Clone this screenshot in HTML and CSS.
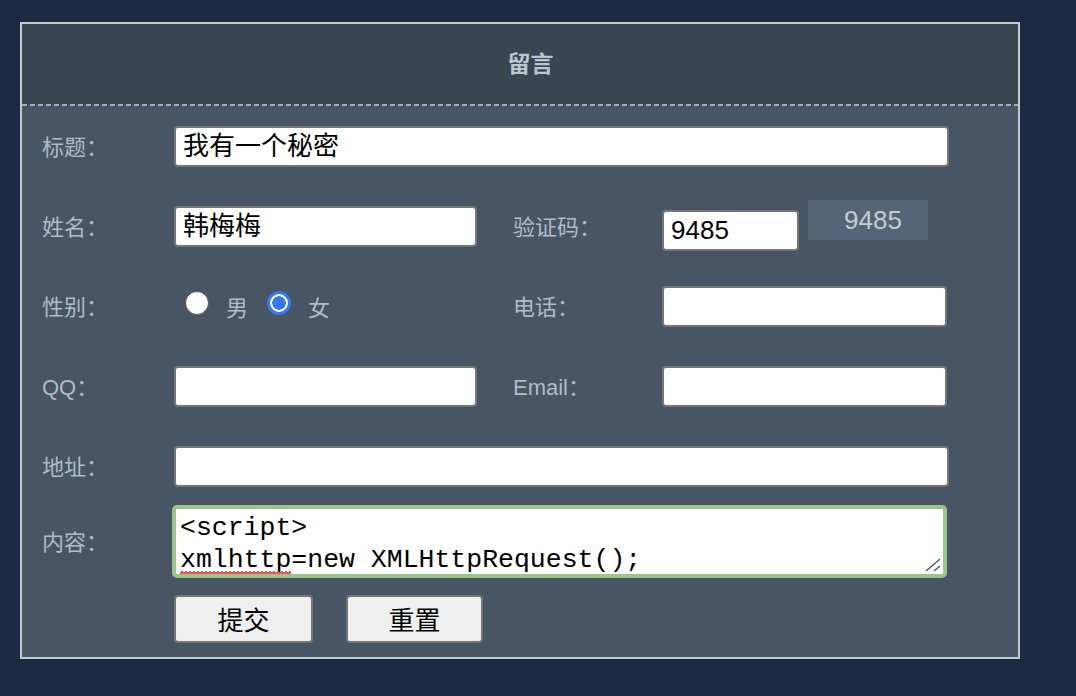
FILE: index.html
```html
<!DOCTYPE html>
<html lang="zh-CN">
<head>
<meta charset="utf-8">
<title>留言</title>
<link rel="stylesheet" href="styles.css">
</head>
<body>
<div class="panel">
  <div class="panel-head">留言</div>
  <div class="dash"></div>
  <div class="panel-body">
    <div class="row">
      <span class="label">标题：</span>
      <div class="field full">我有一个秘密</div>
    </div>
    <div class="row">
      <span class="label">姓名：</span>
      <div class="field half">韩梅梅</div>
      <span class="label right">验证码：</span>
      <div class="captcha-group">
        <div class="field code">9485</div>
        <div class="captcha">9485</div>
      </div>
    </div>
    <div class="row">
      <span class="label">性别：</span>
      <div class="radios">
        <span class="radio"></span><span class="radio-text">男</span>
        <span class="radio checked"></span><span class="radio-text">女</span>
      </div>
      <span class="label right">电话：</span>
      <div class="field rhalf"></div>
    </div>
    <div class="row">
      <span class="label">QQ：</span>
      <div class="field half"></div>
      <span class="label right">Email：</span>
      <div class="field rhalf"></div>
    </div>
    <div class="row">
      <span class="label">地址：</span>
      <div class="field full"></div>
    </div>
    <div class="row-text">
      <span class="label">内容：</span>
      <div class="textarea">
        <div class="ta-text">&lt;script&gt;
<span class="misspelled">xmlhttp</span>=new XMLHttpRequest();</div>
        <svg class="grip" width="16" height="14" viewBox="0 0 16 14"><path d="M1 13 L15 1 M9 13 L15 8" stroke="#555" stroke-width="1.4" fill="none"/></svg>
      </div>
    </div>
    <div class="buttons">
      <div class="btn btn-submit">提交</div>
      <div class="btn btn-reset">重置</div>
    </div>
  </div>
</div>
</body>
</html>
```
FILE: styles.css
```css
html, body {
  margin: 0;
  padding: 0;
  background: #1c2b43;
  width: 1076px;
  height: 696px;
  overflow: hidden;
}
body {
  padding-top: 22px;
  padding-left: 20px;
  box-sizing: border-box;
  font-family: "Liberation Sans", "Noto Sans CJK SC", sans-serif;
}
.panel {
  width: 1000px;
  border: 2px solid #c3cbd3;
  box-sizing: border-box;
  background: #475564;
}
.panel-head {
  height: 80px;
  background: #3a4552;
  color: #bcc6cf;
  font-size: 23px;
  font-weight: bold;
  display: flex;
  align-items: center;
  justify-content: center;
  padding-left: 21px;
  padding-bottom: 4px;
  box-sizing: border-box;
  font-family: "Noto Sans CJK SC", sans-serif;
}
.dash {
  height: 2px;
  background: repeating-linear-gradient(to right, #a2aebb 0 5px, transparent 5px 8px);
  background-color: #3f4b59;
}
.panel-body {
  padding: 0 0 14px 20px;
}
.row {
  height: 80px;
  display: flex;
  align-items: center;
}
.label {
  width: 132px;
  flex: none;
  color: #b0bcc7;
  font-size: 22px;
  font-family: "Liberation Sans", "Noto Sans CJK SC", sans-serif;
  margin-top: -3px;
}
.label.right {
  width: 149px;
  margin-left: 36px;
}
.field {
  height: 41px;
  box-sizing: border-box;
  background: #fff;
  border: 2px solid #767676;
  border-radius: 4px;
  padding-left: 7px;
  font-size: 26px;
  line-height: 37px;
  color: #000;
  flex: none;
}
.field.full { width: 775px; }
.field.half { width: 303px; }
.field.rhalf { width: 285px; }
.field.code { width: 137px; margin-top: 10px; }
.captcha-group {
  display: flex;
  align-items: flex-start;
  gap: 9px;
  height: 51px;
  margin-top: -2px;
}
.captcha {
  width: 120px;
  height: 40px;
  background: #536576;
  color: #c4ccd3;
  font-size: 26px;
  line-height: 40px;
  text-align: center;
  padding-left: 10px;
  box-sizing: border-box;
}
.radios {
  width: 303px;
  display: flex;
  align-items: center;
  padding-left: 11px;
  box-sizing: border-box;
}
.radio {
  width: 24px;
  height: 24px;
  box-sizing: border-box;
  border-radius: 50%;
  background: #fff;
  border: 1.5px solid #555;
  margin-bottom: 7px;
  flex: none;
}
.radio.checked {
  border: 3px solid #3478f6;
  background: radial-gradient(circle, #3478f6 0 6.5px, #fff 7px);
}
.radio-text {
  color: #b0bcc7;
  font-size: 22px;
  margin-left: 17px;
  margin-right: 19px;
}
.row-text {
  display: flex;
  align-items: center;
  margin-top: -1px;
}
.textarea {
  position: relative;
  width: 775px;
  height: 73px;
  margin-left: -2px;
  box-sizing: border-box;
  border: 4px solid #9cc48b;
  border-radius: 5px;
  background: #fff;
  padding: 4px 0 0 4px;
  overflow: hidden;
}
.ta-text {
  font-family: "Liberation Mono", "DejaVu Sans Mono", monospace;
  font-size: 26.5px;
  line-height: 31.5px;
  white-space: pre;
  color: #000;
}
.misspelled {
  position: relative;
}
.misspelled::after {
  content: "";
  position: absolute;
  left: 0;
  right: 0;
  bottom: 0;
  height: 4px;
  background: radial-gradient(circle, #e25a5a 0 1.6px, transparent 1.9px);
  background-size: 4px 4px;
}
.grip {
  position: absolute;
  right: 2px;
  bottom: 2px;
}
.buttons {
  display: flex;
  gap: 33px;
  margin-top: 17px;
  margin-left: 132px;
}
.btn {
  height: 48px;
  box-sizing: border-box;
  background: #efefef;
  border: 2px solid #767676;
  border-radius: 4px;
  font-size: 26px;
  line-height: 44px;
  text-align: center;
  color: #000;
  font-family: "Noto Sans CJK SC", sans-serif;
}
.btn-submit { width: 139px; }
.btn-reset { width: 137px; }
```
